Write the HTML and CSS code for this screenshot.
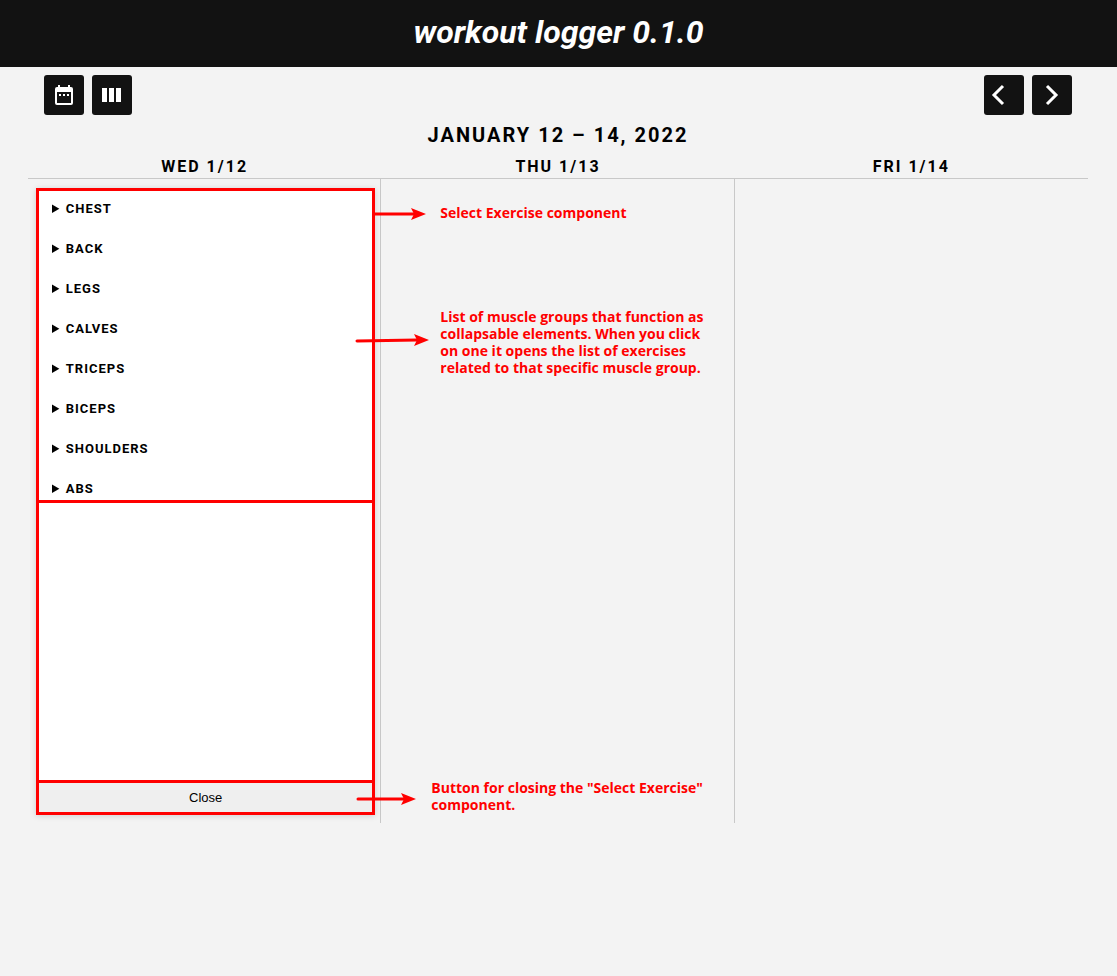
FILE: index.html
```html
<!DOCTYPE html>
<html lang="en">
<head>
<meta charset="utf-8">
<title>workout logger</title>
<link rel="stylesheet" href="styles.css">
</head>
<body>
<header class="app-header"><h1 class="app-title">workout logger 0.1.0</h1></header>
<main class="calendar">
  <nav class="toolbar">
    <div class="button-group">
      <button class="icon-button" type="button" aria-label="Month view">
        <svg viewBox="0 0 40 40"><path fill="#fff" fill-rule="evenodd" d="M14 10h2v2h8v-2h2v2h1q2 0 2 2v14q0 2-2 2H13q-2 0-2-2V14q0-2 2-2h1zM13 17v11h14V17zM15 19h2v2h-2zM19 19h2v2h-2zM23 19h2v2h-2z"/></svg>
      </button>
      <button class="icon-button" type="button" aria-label="Column view">
        <svg viewBox="0 0 40 40"><path fill="#fff" d="M10 13h5v14h-5zM17 13h5v14h-5zM24 13h5v14h-5z"/></svg>
      </button>
    </div>
    <div class="button-group">
      <button class="icon-button" type="button" aria-label="Previous">
        <svg viewBox="0 0 40 40"><path class="chevron" d="M19 11l-9 9 9 9"/></svg>
      </button>
      <button class="icon-button" type="button" aria-label="Next">
        <svg viewBox="0 0 40 40"><path class="chevron" d="M15 11l9 9-9 9"/></svg>
      </button>
    </div>
  </nav>
  <h2 class="date-range">January 12 – 14, 2022</h2>
  <div class="day-names">
    <h3 class="day-name">Wed 1/12</h3>
    <h3 class="day-name">Thu 1/13</h3>
    <h3 class="day-name">Fri 1/14</h3>
  </div>
  <div class="days">
    <section class="day">
      <div class="exercise-picker">
        <div class="muscle-groups">
          <details><summary>Chest</summary></details>
          <details><summary>Back</summary></details>
          <details><summary>Legs</summary></details>
          <details><summary>Calves</summary></details>
          <details><summary>Triceps</summary></details>
          <details><summary>Biceps</summary></details>
          <details><summary>Shoulders</summary></details>
          <details><summary>Abs</summary></details>
        </div>
        <button class="close-button" type="button">Close</button>
      </div>
      <svg class="arrow arrow-component" viewBox="0 0 54 14"><path class="shaft" d="M2 7h40"/><path class="head" d="M54 7L39 13l3-6-3-6z"/></svg>
      <svg class="arrow arrow-groups" viewBox="0 0 74 14"><path class="shaft" d="M2 8L62 7"/><path class="head" d="M74 7L59 13l3-6-3-6z"/></svg>
      <svg class="arrow arrow-close" viewBox="0 0 60 14"><path class="shaft" d="M2 7h46"/><path class="head" d="M60 7L45 13l3-6-3-6z"/></svg>
    </section>
    <section class="day">
      <p class="note note-component">Select Exercise component</p>
      <p class="note note-groups">List of muscle groups that function as<br>collapsable elements. When you click<br>on one it opens the list of exercises<br>related to that specific muscle group.</p>
      <p class="note note-close">Button for closing the "Select Exercise"<br>component.</p>
    </section>
    <section class="day"></section>
  </div>
</main>
</body>
</html>
```

FILE: styles.css
```css
* {
  box-sizing: border-box;
}

body {
  margin: 0;
  background: #f3f3f3;
  color: #000;
  font-family: Roboto, sans-serif;
}

h1, h2, h3, p {
  margin: 0;
}

.app-header {
  padding: 12px 16px 15px;
  background: #121212;
  text-align: center;
}

.app-title {
  color: #fff;
  font-size: 32px;
  line-height: 40px;
  font-style: italic;
  font-weight: 700;
}

.calendar {
  padding: 8px 29px 0 28px;
}

.toolbar {
  display: flex;
  justify-content: space-between;
  padding: 0 16px;
}

.button-group {
  display: flex;
  gap: 8px;
}

.icon-button {
  width: 40px;
  height: 40px;
  padding: 0;
  border: 0;
  border-radius: 3px;
  background: #121212;
}

.icon-button svg {
  display: block;
}

.chevron {
  fill: none;
  stroke: #fff;
  stroke-width: 3;
}

.date-range {
  padding: 8px 0;
  font-size: 20px;
  line-height: 24px;
  letter-spacing: 2px;
  text-align: center;
  text-transform: uppercase;
}

.day-names,
.days {
  display: grid;
  grid-template-columns: repeat(3, 1fr);
}

.day-names {
  border-bottom: 1px solid #c8c8c8;
}

.day-name {
  font-size: 16px;
  line-height: 23px;
  letter-spacing: 2px;
  text-align: center;
  text-transform: uppercase;
}

.day {
  position: relative;
  display: flex;
  min-height: 644px;
  padding: 9px 5px 8px 8px;
  border-right: 1px solid #c8c8c8;
}

.day:last-child {
  border-right: 0;
}

.day:first-child {
  z-index: 1;
}

.exercise-picker {
  flex: 1;
  display: flex;
  flex-direction: column;
  border: 3px solid #f00;
  background: #fff;
  box-shadow: 0 1px 6px rgba(0, 0, 0, 0.15);
}

.muscle-groups {
  display: grid;
  gap: 24px;
  padding: 10px 13px 3px;
  border-bottom: 3px solid #f00;
}

.muscle-groups summary {
  font-size: 13px;
  line-height: 16px;
  font-weight: 700;
  letter-spacing: 1px;
  text-transform: uppercase;
}

.close-button {
  margin-top: auto;
  padding: 0;
  border: 0;
  border-top: 3px solid #f00;
  background: #efefef;
  color: #000;
  font-family: "Liberation Sans", Arial, sans-serif;
  font-size: 13px;
  line-height: 29px;
}

.note {
  position: absolute;
  color: #f00;
  font-family: "Open Sans", sans-serif;
  font-size: 14px;
  line-height: 17px;
  font-weight: 700;
  white-space: nowrap;
}

.note-component {
  top: 25px;
  left: 59px;
}

.note-groups {
  top: 129px;
  left: 59px;
}

.note-close {
  bottom: 10px;
  left: 50px;
}

.arrow {
  position: absolute;
  height: 14px;
}

.arrow-component {
  top: 28px;
  right: -46px;
  width: 54px;
}

.arrow-groups {
  top: 154px;
  right: -49px;
  width: 74px;
}

.arrow-close {
  bottom: 17px;
  right: -36px;
  width: 60px;
}

.shaft {
  stroke: #f00;
  stroke-width: 3;
  stroke-linecap: round;
}

.head {
  fill: #f00;
}
```
